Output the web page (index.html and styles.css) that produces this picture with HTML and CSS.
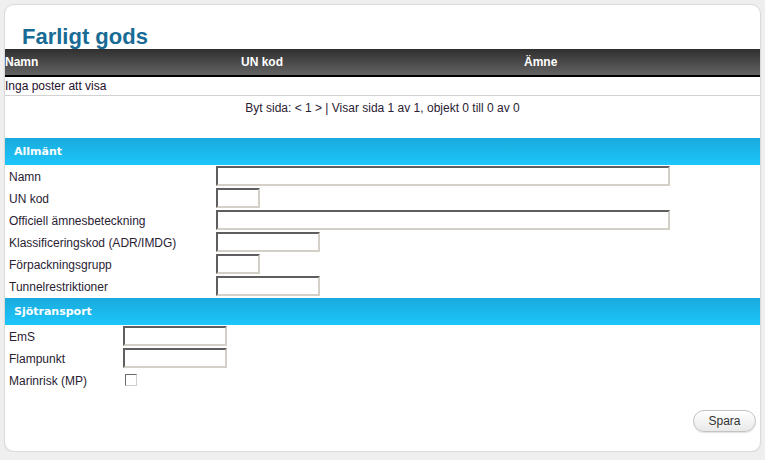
FILE: index.html
```html
<!DOCTYPE html>
<html lang="sv">
<head>
<meta charset="utf-8">
<title>Farligt gods</title>
<link rel="stylesheet" href="styles.css">
</head>
<body>
<div class="card">
  <h1 class="title">Farligt gods</h1>
  <div class="grid-head">
    <span>Namn</span><span>UN kod</span><span>Ämne</span>
  </div>
  <div class="grid-empty">Inga poster att visa</div>
  <div class="pager">Byt sida: &lt; 1 &gt; | Visar sida 1 av 1, objekt 0 till 0 av 0</div>

  <div class="section-bar">Allmänt</div>
  <div class="form form-wide">
    <label class="lbl">Namn</label><input class="inp w-xl" type="text">
    <label class="lbl">UN kod</label><input class="inp w-s" type="text">
    <label class="lbl">Officiell ämnesbeteckning</label><input class="inp w-xl" type="text">
    <label class="lbl">Klassificeringskod (ADR/IMDG)</label><input class="inp w-m" type="text">
    <label class="lbl">Förpackningsgrupp</label><input class="inp w-s" type="text">
    <label class="lbl">Tunnelrestriktioner</label><input class="inp w-m" type="text" autofocus>
  </div>

  <div class="section-bar">Sjötransport</div>
  <div class="form form-narrow">
    <label class="lbl">EmS</label><input class="inp w-m" type="text">
    <label class="lbl">Flampunkt</label><input class="inp w-m" type="text">
    <label class="lbl">Marinrisk (MP)</label><span class="chk-cell"><input class="chk" type="checkbox"></span>
  </div>

  <div class="actions">
    <button class="btn" type="button">Spara</button>
  </div>
</div>
</body>
</html>
```

FILE: styles.css
```css
* { box-sizing: border-box; }

body {
  margin: 0;
  background: #efefef;
  font-family: "Liberation Sans", Arial, sans-serif;
  font-size: 12px;
  color: #2a2233;
}

.card {
  width: 757px;
  margin: 4px 0 0 4px;
  background: #fff;
  border: 1px solid #dadada;
  border-radius: 10px;
  padding: 19px 0 19px 0;
  box-shadow: 0 1px 2px rgba(0,0,0,0.06);
}

.title {
  margin: 0;
  padding-left: 17px;
  padding-top: 1px;
  font-size: 22px;
  line-height: 24px;
  font-weight: bold;
  color: #186b94;
}

.grid-head {
  display: grid;
  grid-template-columns: 236px 283px 1fr;
  height: 28px;
  background: linear-gradient(#2f2f2f, #636363);
  border-bottom: 2px solid #000;
  color: #fff;
  font-weight: bold;
  align-items: center;
  line-height: 14px;
}

.grid-empty {
  height: 19px;
  line-height: 18px;
  border-bottom: 1px solid #d2d2d2;
  color: #1e0f2e;
}

.pager {
  margin: 4px 0 22px;
  line-height: 16px;
  text-align: center;
}

.section-bar {
  height: 27px;
  line-height: 27px;
  padding-left: 9px;
  background: linear-gradient(#1aaadd, #1dc6fa);
  color: #fff;
  font-family: "DejaVu Sans", Verdana, sans-serif;
  font-weight: bold;
  font-size: 11px;
}

.form {
  display: grid;
  row-gap: 2px;
  align-items: center;
  padding: 1px 0 2px;
}

.form-wide { grid-template-columns: 211px 1fr; }
.form-narrow { grid-template-columns: 118px 1fr; }

.lbl {
  padding: 2px 0 0 4px;
  line-height: 18px;
}

.inp {
  height: 20px;
  margin: 0;
  padding: 0 2px;
  border: 2px solid;
  border-color: #5e5e5e #d4d0c8 #d4d0c8 #5e5e5e;
  background: #fff;
  font: 12px "Liberation Sans", Arial, sans-serif;
  outline: none;
}

.w-xl { width: 454px; }
.w-m { width: 104px; }
.w-s { width: 44px; }

.chk-cell {
  height: 20px;
  display: flex;
  align-items: center;
}

.chk {
  appearance: none;
  -webkit-appearance: none;
  width: 12px;
  height: 12px;
  margin: 0 0 0 2px;
  border: 1px solid;
  border-color: #6a6a6a #cfcfcf #cfcfcf #6a6a6a;
  background: #fff;
}

.actions {
  display: flex;
  justify-content: flex-end;
  padding-right: 4px;
  margin-top: 18px;
}

.btn {
  width: 63px;
  height: 22px;
  padding: 0;
  border: 1px solid #c4c4c4;
  border-radius: 11px;
  background: linear-gradient(#ffffff, #e9e9e9);
  box-shadow: 0 1px 1px rgba(0,0,0,0.12);
  color: #333;
  font: 12px "Liberation Sans", Arial, sans-serif;
}
```
